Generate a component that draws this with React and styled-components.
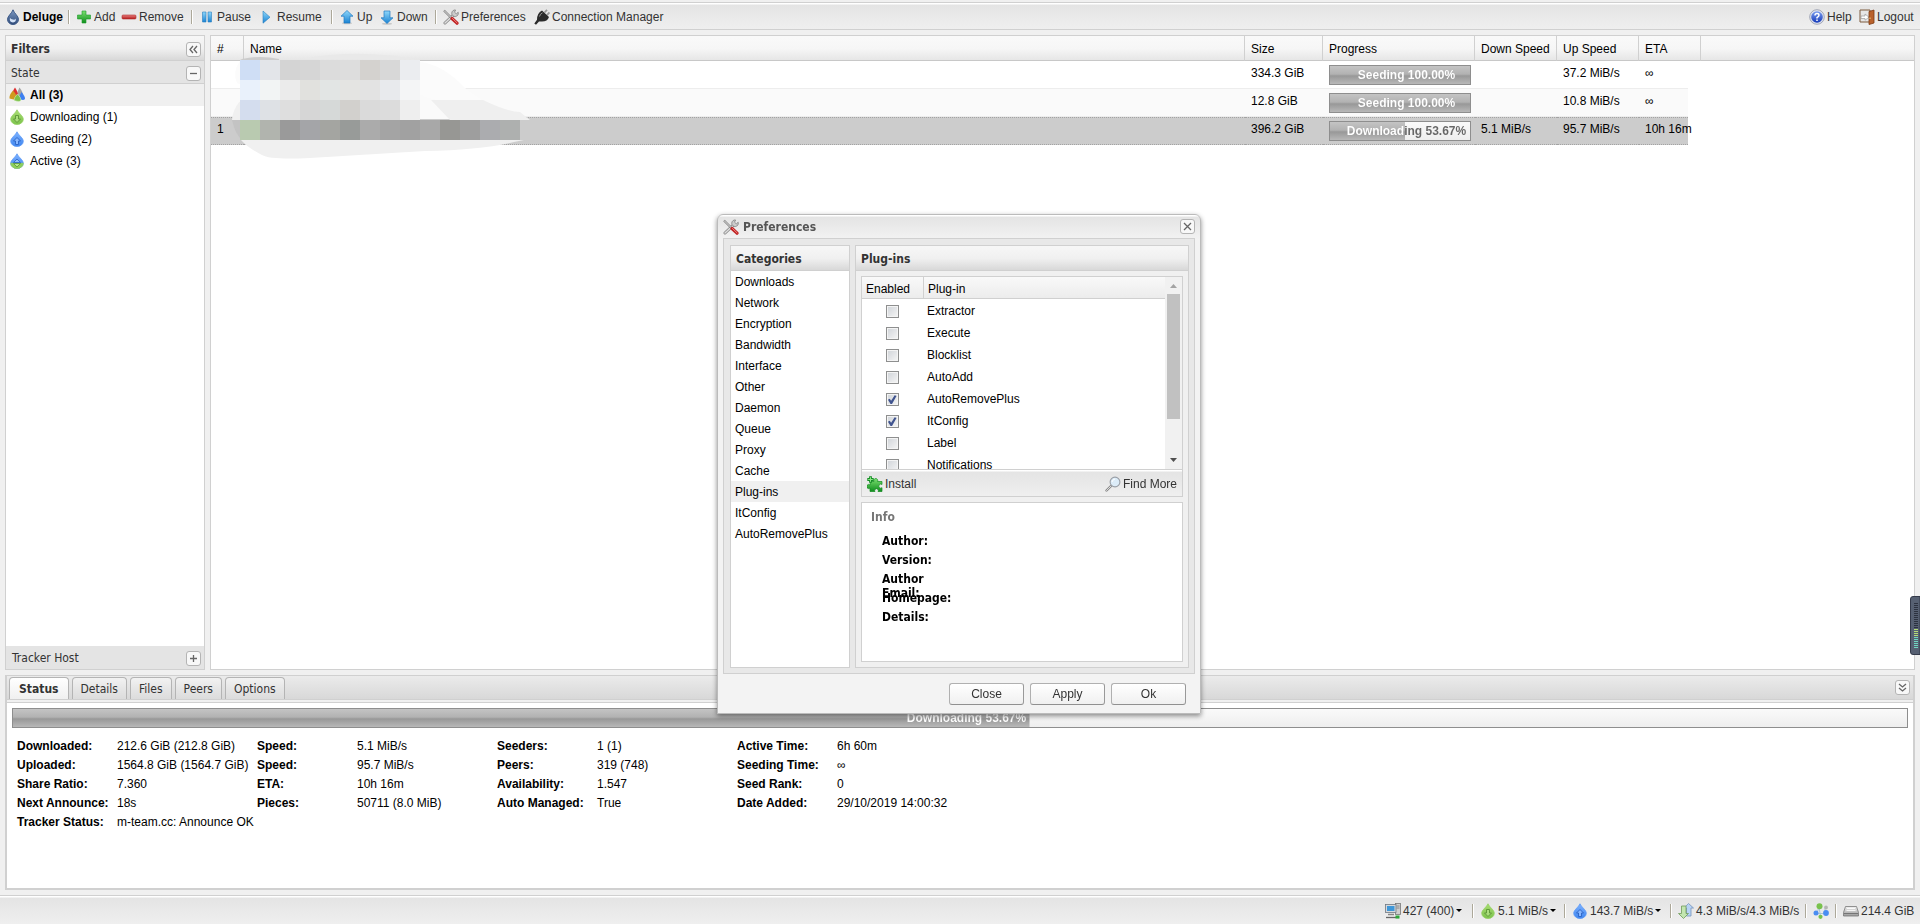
import styled, { createGlobalStyle } from "styled-components";

const sans = `"Liberation Sans", Arial, sans-serif`;
const title = `"DejaVu Sans Condensed", Tahoma, sans-serif`;

const GlobalStyle = createGlobalStyle`
  * { box-sizing: border-box; }
  body {
    margin: 0;
    background: #f0f0f0;
    color: #000;
    font: 12px/14px ${sans};
  }
  button, input { margin: 0; padding: 0; font: inherit; color: inherit; }
  ul, dl, dd { margin: 0; padding: 0; list-style: none; }
  table { border-collapse: separate; border-spacing: 0; table-layout: fixed; width: 100%; }
`;

const Page = styled.div`
  display: flex;
  flex-direction: column;
  height: 100vh;
  min-height: 600px;
  overflow: hidden;
`;

/* toolbars */

const Bar = styled.div`
  display: flex;
  align-items: center;
  flex: none;
  padding: 1px 2px 0;
  color: #333;
  border: solid #d0d0d0;
  border-width: 1px 0;
  background: linear-gradient(#fff 0 1px, #e4e4e4 2px, #efefef);
`;

const TopBar = styled(Bar)`
  height: 28px;
  margin-top: 2px;
`;

const StatusBar = styled(Bar)`
  height: 29px;
  border-bottom: 0;
  justify-content: flex-end;
`;

const ToolButton = styled.button`
  display: flex;
  align-items: center;
  flex: none;
  gap: 2px;
  width: ${({ $width }) => ($width ? `${$width}px` : "auto")};
  height: 22px;
  padding: 0 3px;
  border: 0;
  background: none;
  white-space: nowrap;
  font-weight: ${({ $bold }) => ($bold ? "bold" : "normal")};
  color: ${({ $bold }) => ($bold ? "#000" : "#333")};
  svg { flex: none; }
`;

const Separator = styled.i`
  width: 1px;
  height: 14px;
  margin: 0 4px;
  background: #aca899;
  box-shadow: 1px 0 #fff;
`;

const Spacer = styled.span`
  flex: 1;
`;

const Caret = styled.i`
  border: 3px solid transparent;
  border-top-color: #000;
  border-bottom: 0;
`;

/* panels */

const Main = styled.main`
  display: flex;
  flex: 1;
  gap: 5px;
  min-height: 0;
  padding: 5px;
`;

const Panel = styled.section`
  display: flex;
  flex-direction: column;
  border: 1px solid #d0d0d0;
  background: #fff;
`;

const FilterPanel = styled(Panel)`
  width: 200px;
`;

const PanelHeader = styled.h2`
  display: flex;
  align-items: center;
  justify-content: space-between;
  flex: none;
  height: 25px;
  margin: 0;
  padding: 2px 3px 0 ${({ $indent }) => $indent || 5}px;
  border-bottom: 1px solid #d0d0d0;
  background: linear-gradient(#f6f6f6 0 1px, #f0f0f0, #d8d8d8);
  font: bold 12px/14px ${title};
  color: #333;
`;

const SubHeader = styled(PanelHeader)`
  height: 23px;
  margin-top: ${({ $last }) => ($last ? "auto" : 0)};
  ${({ $last }) => $last && "border-bottom-color: #e4e4e4;"}
  background: #e4e4e4;
  font-weight: normal;
`;

const ToolIcon = styled.button`
  display: flex;
  align-items: center;
  justify-content: center;
  flex: none;
  width: 15px;
  height: 15px;
  border: 1px solid #b4b4b4;
  border-radius: 3px;
  background: #f8f8f8;
  svg { display: block; }
`;

const FilterRow = styled.li`
  display: flex;
  align-items: center;
  gap: 5px;
  height: 22px;
  padding: 0 3px;
  background: ${({ $selected }) => ($selected ? "#f0f0f0" : "none")};
  font-weight: ${({ $selected }) => ($selected ? "bold" : "normal")};
`;

/* torrent grid */

const GridPanel = styled(Panel)`
  position: relative;
  flex: 1;
  min-width: 0;
`;

const HeadCell = styled.th`
  height: 25px;
  padding: 2px 6px 0;
  text-align: left;
  font-weight: normal;
  white-space: nowrap;
  border-bottom: 1px solid #c8c8c8;
  border-right: ${({ $last }) => ($last ? 0 : "1px solid #d0d0d0")};
  background: linear-gradient(#f9f9f9 0 2px, #f6f6f6, #e6e6e6);
`;

const TorrentRow = styled.tr`
  td {
    height: 28px;
    padding: 5px 6px 0;
    vertical-align: top;
    white-space: nowrap;
  }
  td.bar { padding: 4px 4px 0 6px; }
  td:not(.rest) {
    background: ${({ $state }) =>
      ({ selected: "#ccc", alt: "#fafafa" })[$state] || "#fff"};
    border-bottom: 1px solid #ededed;
    ${({ $state }) =>
      $state === "selected" &&
      "border: dotted #a3a3a3; border-width: 1px 0; padding-top: 4px;"}
  }
  td.bar.bar { padding-top: ${({ $state }) => ($state === "selected" ? 3 : 4)}px; }
`;

const Mosaic = styled.svg`
  position: absolute;
  left: -1px;
  top: 14px;
`;

const ProgressTrack = styled.div`
  display: flex;
  height: 20px;
  border: 1px solid #8e8e8e;
  background:
    linear-gradient(#c4c4c4, #b2b2b2 45%, #989898 55%, #b8b8b8) no-repeat,
    linear-gradient(#fafafa, #eee);
`;

const ProgressText = styled.span`
  flex: 1;
  padding-left: 13px;
  text-align: center;
  font: bold 12px/18px ${sans};
  color: transparent;
  background-clip: text;
`;

/* details panel */

const Details = styled.section`
  display: flex;
  flex-direction: column;
  flex: none;
  height: 215px;
  margin: 0 5px 5px;
  border: solid #d0d0d0;
  border-width: 1px 2px 2px;
`;

const TabStrip = styled.div`
  display: flex;
  align-items: flex-end;
  gap: 3px;
  height: 24px;
  padding: 0 3px 0 2px;
  border-bottom: 1px solid #d0d0d0;
  background: linear-gradient(#ebebeb, #d8d8d8);
`;

const Tab = styled.button`
  height: 22px;
  padding: 0 ${({ $active }) => ($active ? 9 : 8)}px;
  border: 1px solid #b4b4b4;
  border-bottom: 0;
  border-radius: 4px 4px 0 0;
  background: ${({ $active }) =>
    $active
      ? "linear-gradient(#fff, #f0f0f0)"
      : "linear-gradient(#f2f2f2, #e6e6e6 50%, #dcdcdc)"};
  font: ${({ $active }) => ($active ? "bold" : "normal")} 12px/14px ${title};
  color: #333;
`;

const StripTool = styled.span`
  margin: 0 0 4px auto;
`;

const StatusBody = styled.div`
  flex: 1;
  margin-top: 2px;
  padding: 5px;
  border-top: 1px solid #d0d0d0;
  background: #fff;
`;

const StatusColumns = styled.div`
  display: flex;
  padding: 8px 5px;
`;

const Facts = styled.dl`
  display: grid;
  grid-template-columns: 100px 140px;
  grid-auto-rows: 19px;
  align-items: center;
  align-content: start;
  white-space: nowrap;
  dt { font-weight: bold; }
`;

/* preferences window */

const Overlay = styled.div`
  position: fixed;
  inset: 4px 2px 0 0;
  display: flex;
  align-items: center;
  justify-content: center;
`;

const Window = styled.div`
  display: flex;
  flex-direction: column;
  width: 484px;
  height: 500px;
  padding: 0 5px;
  border: 1px solid #bbb;
  border-radius: 6px 6px 0 0;
  background: linear-gradient(#fff 0 1px, #e4e4e4 2px, #f2f2f2 24px, #f3f3f3 25px);
  box-shadow: 0 2px 5px rgba(0, 0, 0, 0.45);
`;

const WindowTitle = styled.header`
  display: flex;
  align-items: center;
  gap: 4px;
  height: 23px;
  font: bold 12px/14px ${title};
  color: #555;
`;

const WindowBody = styled.div`
  display: flex;
  flex: 1;
  gap: 5px;
  min-height: 0;
  padding: 6px 5px 5px 6px;
  border: 1px solid #d0d0d0;
  background: #e8e8e8;
`;

const Categories = styled(Panel)`
  width: 120px;
  li {
    padding: 4px 4px 3px;
  }
  li[aria-selected="true"] { background: #f0f0f0; }
`;

const PluginPage = styled(Panel)`
  flex: 1;
  background: #f0f0f0;
`;

const PluginContent = styled.div`
  display: flex;
  flex-direction: column;
  flex: 1;
  gap: 5px;
  padding: 5px;
`;

const PluginBox = styled(Panel)`
  height: 221px;
`;

const PluginScroll = styled.div`
  display: flex;
  flex: 1;
  min-height: 0;
  overflow: hidden;
`;

const PluginTable = styled.table`
  flex: 1;
  width: auto;
  th {
    height: 22px;
    padding: 2px 4px 0;
    text-align: left;
    font-weight: normal;
    border-bottom: 1px solid #d0d0d0;
    background: linear-gradient(#f9f9f9, #ececec);
  }
  th:first-child { border-right: 1px solid #d0d0d0; }
  td { height: 22px; padding: 2px 3px 0; }
  td:first-child { text-align: center; padding-right: 5px; }
`;

const Check = styled.input`
  appearance: none;
  display: inline-block;
  position: relative;
  width: 13px;
  height: 13px;
  vertical-align: middle;
  border: 1px solid #8e8f8f;
  background: linear-gradient(135deg, #cfd3d8, #f6f6f6);
  box-shadow: inset 0 0 0 1px #f4f4f4;
  &:checked::after {
    content: "";
    position: absolute;
    inset: 1px;
    background: #40548f;
    clip-path: polygon(5% 50%, 25% 40%, 40% 62%, 80% 0, 100% 8%, 50% 98%, 34% 98%);
  }
`;

const ScrollBar = styled.div`
  display: flex;
  flex-direction: column;
  align-items: center;
  width: 17px;
  background: #f1f1f1;
  svg { height: 17px; flex: none; }
  svg:last-child { margin-top: auto; }
`;

const Thumb = styled.div`
  width: 13px;
  height: 125px;
  background: #c1c1c1;
`;

const PluginBar = styled(Bar)`
  height: 27px;
  border-bottom: 0;
  justify-content: space-between;
`;

const Info = styled.section`
  flex: 1;
  padding: 6px 9px;
  border: 1px solid #d0d0d0;
  background: #fff;
  h3 {
    margin: 0 0 9px;
    font: bold 12px/16px ${title};
    color: #777;
  }
`;

const InfoList = styled.ul`
  padding-left: 11px;
  font: bold 12px/14px ${title};
  li { width: 60px; height: 19px; }
`;

const Buttons = styled.footer`
  display: flex;
  justify-content: flex-end;
  gap: 6px;
  padding: 9px 9px 8px;
`;

const PushButton = styled.button`
  width: 75px;
  height: 22px;
  border: 1px solid #999;
  border-color: #b0b0b0 #999 #909090 #b0b0b0;
  border-radius: 3px;
  background: linear-gradient(#fff, #f0f0f0);
  color: #333;
`;

const SideMeter = styled.svg`
  position: fixed;
  right: 0;
  top: 596px;
`;

/* icons */

const dropPath = "M8 .8C9.500 4.200 14.300 7 14.300 10.300A6.300 5.200 0 0 1 1.700 10.300C1.700 7 6.500 4.200 8 .8Z";
const upArrow = "M8 1.500l6 5.700h-3V14H5V7.200H2Z";

function Svg({ children, size = 16 }) {
  return (
    <svg width={size} height={size} viewBox="0 0 16 16" aria-hidden="true">
      {children}
    </svg>
  );
}

function Gradients() {
  const list = [
    ["green", "#a9dd72", "#7cc34c"],
    ["blue", "#7db2ff", "#3f86f0"],
    ["sky", "#8fd8fb", "#1b83d3"],
    ["leaf", "#7be070", "#0f8d1d"],
    ["red", "#e88181", "#b51a1a"],
    ["navy", "#7f9bc4", "#2e4a78"],
    ["help", "#7da0f0", "#1539b8"],
    ["disk", "#f2f2f2", "#9a9a9a"],
  ];
  return (
    <svg width="0" height="0" style={{ position: "absolute" }} aria-hidden="true">
      <defs>
        {list.map(([id, from, to]) => (
          <linearGradient key={id} id={id} x1="0" y1="0" x2="0" y2="1">
            <stop offset="0" stopColor={from} />
            <stop offset="1" stopColor={to} />
          </linearGradient>
        ))}
      </defs>
    </svg>
  );
}

const icons = {
  deluge: (
    <>
      <path d="M8 .8C9 4.200 13.500 7 13.500 10.300A5.500 5.200 0 0 1 2.500 10.300C2.500 7 7 4.200 8 .8Z" fill="url(#navy)" stroke="#3d5a88" />
      <path d="M5 9Q4 13 8 13.500Q11.500 13 10.800 9.500Q10.500 11 8 10.500Q6 10 5 9Z" fill="#d4e2f6" />
    </>
  ),
  add: <path d="M6 2h4v4h4.500v4H10v4H6v-4H1.500V6H6Z" fill="url(#leaf)" stroke="#1b9a2a" strokeWidth=".6" />,
  remove: <rect x="1" y="6" width="14" height="4" rx="1" fill="url(#red)" stroke="#b03030" strokeWidth=".6" />,
  pause: <path d="M3.500 3h3.500v10H3.500ZM9 3h3.500v10H9Z" fill="url(#sky)" stroke="#2a7fc0" strokeWidth=".6" />,
  resume: <path d="M4 2l7 6.200-7 6Z" fill="url(#sky)" stroke="#2a7fc0" strokeWidth=".6" />,
  up: (
    <>
      <ellipse cx="8" cy="14.300" rx="5" ry="1" fill="#c8c8c8" />
      <path d={upArrow} fill="url(#sky)" stroke="#1f7ac2" strokeWidth=".7" />
    </>
  ),
  down: (
    <>
      <ellipse cx="8" cy="14.800" rx="5" ry="1" fill="#c8c8c8" />
      <path d="M8 14.500l6-5.700h-3V2H5v6.800H2Z" fill="url(#sky)" stroke="#1f7ac2" strokeWidth=".7" />
    </>
  ),
  tools: (
    <>
      <path d="M2 14L11 5.500" stroke="#808080" strokeWidth="3" strokeLinecap="round" />
      <path d="M2 14L11 5.500" stroke="#ddd" strokeWidth="1.600" strokeLinecap="round" />
      <path d="M15.200 3.300L13.300 4.800 11.500 3.200 12.600 1A3.300 3.300 0 1 0 15.200 3.300Z" fill="#ccc" stroke="#808080" strokeWidth=".8" />
      <path d="M1 1.500L8.500 9" stroke="#808080" strokeWidth="2.200" />
      <path d="M1 1.500L8.500 9" stroke="#e2e2e2" strokeWidth="1" />
      <path d="M9 9.500L14 14.200" stroke="#c02525" strokeWidth="3.200" strokeLinecap="round" />
      <path d="M9.500 9.500L14 13.800" stroke="#f08080" strokeWidth="1" strokeLinecap="round" />
    </>
  ),
  plug: (
    <>
      <path d="M10.500 3.500L13 .8M13 6L15.500 3.500" stroke="#999" strokeWidth="1.800" />
      <path d="M8 1.500L15 8Q13.500 12.500 8 12.500L5 12.500 2 15.800.300 14.500 3 10.800Q3 4 8 1.500Z" fill="#2b2b2b" />
      <path d="M5.500 7.500Q6 5 8.500 3.800" stroke="#999" fill="none" />
    </>
  ),
  help: (
    <>
      <circle cx="8" cy="8" r="7.300" fill="#dfe3ee" stroke="#8f96a8" strokeWidth=".8" />
      <circle cx="8" cy="8" r="5.800" fill="url(#help)" />
      <path d="M6 6.500Q6 4.600 8 4.600T10 6.300Q10 7.300 8 8.600V9.500M8 10.500V12" fill="none" stroke="#fff" strokeWidth="1.500" />
    </>
  ),
  logout: (
    <>
      <path d="M1 1h10v12H1Z" fill="#e6e6e6" stroke="#7d5a3c" />
      <path d="M2 7h4V5l4 3.200-4 3V9.500H2Z" fill="#fff" stroke="#999" strokeWidth=".7" />
      <path d="M10 2.500l5-1.500v13l-5 1.500Z" fill="#b9622d" stroke="#7c3a12" strokeWidth=".8" />
      <path d="M11 8.500v1.500" stroke="#f4d27c" />
    </>
  ),
  all: (
    <>
      <path d="M10.500 .5Q14 5 14 8T8 8Q8 5 10.500 .5Z" fill="#a5a5a5" />
      <path d="M12.500 5Q16 9 16 11.500T10 12Q10 9 12.500 5Z" fill="#3d7ff0" />
      <path d="M6 .5Q9 5 9 8T3 8Q3 5 6 .5Z" fill="#dc3131" />
      <path d="M4 3.500Q8 8 8 11T.5 11.500Q0 8 4 3.500Z" fill="#cf9a1f" />
      <path d="M8.500 7Q12 10.500 12 13T5 13.500Q5 10.500 8.500 7Z" fill="#7cc24a" stroke="#e4f5d6" strokeWidth=".5" />
    </>
  ),
  downloading: (
    <>
      <path d={dropPath} fill="url(#green)" stroke="#94cf62" strokeWidth=".8" />
      <path d="M6.500 6.500h3v3.500h2L8 13.500 4.500 10h2Z" fill="#a9dd7c" stroke="#5b9436" strokeWidth=".9" />
    </>
  ),
  seeding: (
    <>
      <path d={dropPath} fill="url(#blue)" stroke="#5c98f5" strokeWidth=".8" />
      <path d="M6.500 13.500V10h-2L8 6.500l3.500 3.500h-2v3.500Z" fill="#86b6ff" stroke="#2a62c4" strokeWidth=".9" />
    </>
  ),
  active: (
    <>
      <path d={dropPath} fill="url(#blue)" stroke="#5c98f5" strokeWidth=".8" />
      <path d="M1.700 10.300H14.300A6.300 5.200 0 0 1 1.700 10.300Z" fill="#8dcf5a" stroke="#94cf62" strokeWidth=".8" />
      <path d="M8 6l3.500 3.500h-7Z" fill="#8fbcff" stroke="#2a62c4" strokeWidth=".8" />
      <path d="M8 14l3.500-3.500h-7Z" fill="#b7e690" stroke="#5b9436" strokeWidth=".8" />
    </>
  ),
  puzzle: (
    <>
      <path d="M3.500 5.500H7a2 2 0 1 1 3.500 0H15v3a2 2 0 1 0 0 3.200V15.500h-4a1.800 1.800 0 1 0-3 0H3v-3.500a2 2 0 1 1 0-3Z" fill="url(#leaf)" stroke="#128a20" strokeWidth=".7" />
      <path d="M3.500 .3v6.400M.3 3.500h6.400" stroke="#168f25" strokeWidth="2.800" />
      <path d="M3.500 1.200v4.600M1.200 3.500h4.600" stroke="#8be487" strokeWidth="1" />
    </>
  ),
  find: (
    <>
      <path d="M1.500 14.500L6 10" stroke="#888" strokeWidth="2.400" strokeLinecap="round" />
      <path d="M1.500 14.500L6 10" stroke="#ddd" strokeWidth="1" strokeLinecap="round" />
      <circle cx="10" cy="6" r="4.900" fill="#dcecf8" stroke="#9a9fa6" strokeWidth="1.100" />
      <path d="M7 6Q7.500 3.500 10 3" stroke="#fff" fill="none" />
    </>
  ),
  network: (
    <>
      <rect x="10.500" y=".5" width="5" height="11" fill="#cfcfcf" stroke="#777" strokeWidth=".8" />
      <path d="M11.500 3h3M11.500 5h3" stroke="#777" strokeWidth=".8" />
      <rect x=".5" y="1.500" width="10.500" height="8" fill="#d5d9dd" stroke="#707880" strokeWidth=".8" />
      <rect x="2" y="3" width="7.500" height="5" fill="#3f97d8" />
      <path d="M3 11.500h6" stroke="#888" strokeWidth="1.500" />
      <path d="M1 14.500h13" stroke="#666" strokeWidth="1.300" />
      <rect x="10.500" y="12.500" width="4" height="3" fill="#2ea83a" />
    </>
  ),
  traffic: (
    <>
      <path d="M10.500 .5l5 4.500h-2.500v8h-4.500V5H6Z" fill="#b7d3f5" stroke="#7794bb" strokeWidth=".8" />
      <path d="M5.500 15.500l5-5H8V3H3.500v7.500H.5Z" fill="#c3e6b0" stroke="#6f9a5b" strokeWidth=".8" />
    </>
  ),
  dht: (
    <>
      <path d="M6 3.500L4 10.500H12L12 5.500M6 3.500L7.500 14" stroke="#a9c4d8" strokeWidth="1" fill="none" />
      <circle cx="6.500" cy="3.300" r="3" fill="#79c24d" />
      <circle cx="13" cy="4.500" r="1.900" fill="#b4b4b4" />
      <circle cx="3" cy="10" r="2.500" fill="#4a8df2" />
      <circle cx="13" cy="10" r="2.900" fill="#4a8df2" />
      <circle cx="7.500" cy="13.800" r="2.100" fill="#79c24d" />
    </>
  ),
  disk: (
    <>
      <path d="M2.500 3.500h11l2 6v3.500H.5V9.500Z" fill="url(#disk)" stroke="#777" strokeWidth=".8" />
      <path d="M1 10.500h14" stroke="#666" strokeWidth=".8" />
      <path d="M4 5.500h8M3.500 7.500h9" stroke="#fff" strokeWidth=".8" />
    </>
  ),
};

const glyphs = {
  collapseLeft: "M7 4L4 7.500 7 11M11 4L8 7.500 11 11",
  minus: "M4 7.500H11",
  plus: "M4 7.500H11M7.500 4V11",
  close: "M4 4L11 11M11 4L4 11",
  collapseDown: "M4 4L7.500 7 11 4M4 8L7.500 11 11 8",
};

const Icon = ({ name }) => <Svg>{icons[name]}</Svg>;

function Tool({ glyph, label }) {
  return (
    <ToolIcon aria-label={label}>
      <svg width="13" height="13" viewBox="1 1 13 13">
        <path d={glyphs[glyph]} fill="none" stroke="#666" strokeWidth="1.300" />
      </svg>
    </ToolIcon>
  );
}

/* data */

const toolbar = [
  ["deluge", "Deluge", 62],
  null,
  ["add", "Add", 45],
  ["remove", "Remove", 69],
  null,
  ["pause", "Pause", 60],
  ["resume", "Resume", 71],
  null,
  ["up", "Up", 40],
  ["down", "Down", 55],
  null,
  ["tools", "Preferences", 91],
  ["plug", "Connection Manager"],
];

const statusItems = [
  ["network", "427 (400)", 86, true],
  ["downloading", "5.1 MiB/s", 83, true],
  ["seeding", "143.7 MiB/s", 97, true],
  ["traffic", "4.3 MiB/s/4.3 MiB/s", 126],
  ["dht", "", 21],
  ["disk", "214.4 GiB", 78],
];

const filters = [
  ["all", "All (3)"],
  ["downloading", "Downloading (1)"],
  ["seeding", "Seeding (2)"],
  ["active", "Active (3)"],
];

const torrents = [
  { size: "334.3 GiB", status: "Seeding", progress: 100, up: "37.2 MiB/s", eta: "∞" },
  { size: "12.8 GiB", status: "Seeding", progress: 100, up: "10.8 MiB/s", eta: "∞", state: "alt" },
  {
    pos: 1,
    size: "396.2 GiB",
    status: "Downloading",
    progress: 53.67,
    down: "5.1 MiB/s",
    up: "95.7 MiB/s",
    eta: "10h 16m",
    state: "selected",
  },
];

const facts = [
  [
    ["Downloaded:", "212.6 GiB (212.8 GiB)"],
    ["Uploaded:", "1564.8 GiB (1564.7 GiB)"],
    ["Share Ratio:", "7.360"],
    ["Next Announce:", "18s"],
    ["Tracker Status:", "m-team.cc: Announce OK"],
  ],
  [
    ["Speed:", "5.1 MiB/s"],
    ["Speed:", "95.7 MiB/s"],
    ["ETA:", "10h 16m"],
    ["Pieces:", "50711 (8.0 MiB)"],
  ],
  [
    ["Seeders:", "1 (1)"],
    ["Peers:", "319 (748)"],
    ["Availability:", "1.547"],
    ["Auto Managed:", "True"],
  ],
  [
    ["Active Time:", "6h 60m"],
    ["Seeding Time:", "∞"],
    ["Seed Rank:", "0"],
    ["Date Added:", "29/10/2019 14:00:32"],
  ],
];

const categories = [
  "Downloads",
  "Network",
  "Encryption",
  "Bandwidth",
  "Interface",
  "Other",
  "Daemon",
  "Queue",
  "Proxy",
  "Cache",
  "Plug-ins",
  "ItConfig",
  "AutoRemovePlus",
];

const plugins = [
  ["Extractor", false],
  ["Execute", false],
  ["Blocklist", false],
  ["AutoAdd", false],
  ["AutoRemovePlus", true],
  ["ItConfig", true],
  ["Label", false],
  ["Notifications", false],
];

const mosaicRows = [
  ["#cfdef5", "#e3e5e9", "#d4d4d4", "#d6d6d6", "#dcdcdc", "#dddddd", "#d4d2cf", "#d8d8d8", "#ebedf0"],
  ["#e9f1fb", "#f2f4f4", "#ebebeb", "#e1e1de", "#e2e5e4", "#e4e4e2", "#e3e3e3", "#e8eaed", "#f4f5f6"],
  ["#d4ddee", "#dee1e5", "#dedede", "#d6d6d6", "#d6d9d8", "#d2d0cd", "#dadada", "#dcdcdc", "#eeeeee"],
  ["#b9cab0", "#b1b4ae", "#9a9a9a", "#a4a5a8", "#a4a5a1", "#989b99", "#ababab", "#a4a4a4", "#a1a1a1", "#a8a8a8", "#979794", "#9e9e9e", "#abacaf", "#aeb0af"],
];

function Progress({ status, value }) {
  return (
    <ProgressTrack style={{ backgroundSize: `${value}% 100%, 100% 100%` }}>
      <ProgressText
        style={{
          backgroundImage: `linear-gradient(90deg, #fff ${value}%, #666 ${value}%)`,
        }}
      >
        {status} {value.toFixed(2)}%
      </ProgressText>
    </ProgressTrack>
  );
}

function NameMosaic() {
  return (
    <Mosaic width="330" height="115" viewBox="0 0 330 115" aria-hidden="true">
      <path d="M32 9Q50 5 69 9V10H30Z" fill="#ccc" />
      <path d="M90 9Q150-2 210 10Z" fill="#e9e9e9" />
      <path d="M30 11Q22 22 27 33L38 38H30Z" fill="#fbfbfb" />
      <path d="M210 12Q232 14 255 38L273 50H210Z" fill="#fbfbfb" />
      <path d="M202 42L225 50 242 69H202Z" fill="#fafafa" />
      <path d="M221 50H273Q298 62 310 62L320 70H240Z" fill="#efefef" />
      <path d="M54 40Q24 46 22 70H54Z" fill="#f0f0f0" />
      <path d="M22 70Q25 84 32 90V70Z" fill="#c3c3c3" />
      <path d="M31 90H314L304 92Q270 100 215 101L100 108Q60 110 52 105Q38 98 31 90Z" fill="#f0f0f0" />
      {mosaicRows.map((row, y) =>
        row.map((fill, x) => (
          <rect key={`${x}-${y}`} x={30 + x * 20} y={10 + y * 20} width="20" height="20" fill={fill} />
        ))
      )}
    </Mosaic>
  );
}

function TorrentGrid() {
  return (
    <GridPanel>
      <table>
        <colgroup>
          <col width="33" />
          <col />
          <col width="78" />
          <col width="152" />
          <col width="82" />
          <col width="82" />
          <col width="49" />
          <col width="13" />
          <col width="213" />
        </colgroup>
        <thead>
          <tr>
            <HeadCell>#</HeadCell>
            <HeadCell>Name</HeadCell>
            <HeadCell>Size</HeadCell>
            <HeadCell>Progress</HeadCell>
            <HeadCell>Down Speed</HeadCell>
            <HeadCell>Up Speed</HeadCell>
            <HeadCell colSpan={2}>ETA</HeadCell>
            <HeadCell $last />
          </tr>
        </thead>
        <tbody>
          {torrents.map((t) => (
            <TorrentRow key={t.size} $state={t.state}>
              <td>{t.pos}</td>
              <td />
              <td>{t.size}</td>
              <td className="bar">
                <Progress status={t.status} value={t.progress} />
              </td>
              <td>{t.down}</td>
              <td>{t.up}</td>
              <td>{t.eta}</td>
              <td className="rest" colSpan={2} />
            </TorrentRow>
          ))}
        </tbody>
      </table>
      <NameMosaic />
    </GridPanel>
  );
}

function Preferences() {
  return (
    <Overlay>
      <Window role="dialog" aria-label="Preferences">
        <WindowTitle>
          <Icon name="tools" />
          Preferences
          <Spacer />
          <Tool glyph="close" label="Close window" />
        </WindowTitle>
        <WindowBody>
          <Categories>
            <PanelHeader>Categories</PanelHeader>
            <ul role="listbox" aria-label="Categories">
              {categories.map((c) => (
                <li key={c} role="option" aria-selected={c === "Plug-ins"}>
                  {c}
                </li>
              ))}
            </ul>
          </Categories>
          <PluginPage>
            <PanelHeader>Plug-ins</PanelHeader>
            <PluginContent>
              <PluginBox>
                <PluginScroll>
                  <PluginTable>
                    <colgroup>
                      <col width="62" />
                      <col />
                    </colgroup>
                    <thead>
                      <tr>
                        <th>Enabled</th>
                        <th>Plug-in</th>
                      </tr>
                    </thead>
                    <tbody>
                      {plugins.map(([name, on]) => (
                        <tr key={name}>
                          <td>
                            <Check type="checkbox" id={name} defaultChecked={on} />
                          </td>
                          <td>
                            <label htmlFor={name}>{name}</label>
                          </td>
                        </tr>
                      ))}
                    </tbody>
                  </PluginTable>
                  <ScrollBar>
                    <svg width="17" height="17" viewBox="0 0 17 17">
                      <path d="M5 11H12L8.500 7Z" fill="#a3a3a3" />
                    </svg>
                    <Thumb />
                    <svg width="17" height="17" viewBox="0 0 17 17">
                      <path d="M5 6H12L8.500 10Z" fill="#505050" />
                    </svg>
                  </ScrollBar>
                </PluginScroll>
                <PluginBar>
                  <ToolButton>
                    <Icon name="puzzle" />
                    Install
                  </ToolButton>
                  <ToolButton>
                    <Icon name="find" />
                    Find More
                  </ToolButton>
                </PluginBar>
              </PluginBox>
              <Info>
                <h3>Info</h3>
                <InfoList>
                  <li>Author:</li>
                  <li>Version:</li>
                  <li>Author Email:</li>
                  <li>Homepage:</li>
                  <li>Details:</li>
                </InfoList>
              </Info>
            </PluginContent>
          </PluginPage>
        </WindowBody>
        <Buttons>
          <PushButton>Close</PushButton>
          <PushButton>Apply</PushButton>
          <PushButton>Ok</PushButton>
        </Buttons>
      </Window>
    </Overlay>
  );
}

function Meter() {
  return (
    <SideMeter width="10" height="59" viewBox="0 0 10 59" aria-hidden="true">
      <path d="M10 .5H3Q.5 .5 .5 3V56Q.5 58.500 3 58.500H10Z" fill="#566072" stroke="#343a4a" />
      {Array.from({ length: 23 }, (_, i) => (
        <rect
          key={i}
          x="4"
          y={7 + i * 2}
          width="4"
          height="1"
          fill={i < 13 ? "#2c3240" : i < 17 ? "#b4dc78" : "#6fd6c0"}
        />
      ))}
    </SideMeter>
  );
}

export default function App() {
  return (
    <Page>
      <GlobalStyle />
      <Gradients />
      <TopBar as="nav">
        {toolbar.map((item, i) =>
          item ? (
            <ToolButton key={item[1]} $bold={i === 0} $width={item[2]}>
              <Icon name={item[0]} />
              {item[1]}
            </ToolButton>
          ) : (
            <Separator key={i} />
          )
        )}
        <Spacer />
        <ToolButton $width={50}>
          <Icon name="help" />
          Help
        </ToolButton>
        <ToolButton $width={62}>
          <Icon name="logout" />
          Logout
        </ToolButton>
      </TopBar>

      <Main>
        <FilterPanel>
          <PanelHeader>
            Filters
            <Tool glyph="collapseLeft" label="Collapse filters" />
          </PanelHeader>
          <SubHeader as="h3">
            State
            <Tool glyph="minus" label="Collapse state" />
          </SubHeader>
          <ul>
            {filters.map(([icon, label], i) => (
              <FilterRow key={label} $selected={i === 0}>
                <Icon name={icon} />
                {label}
              </FilterRow>
            ))}
          </ul>
          <SubHeader as="h3" $last $indent={6}>
            Tracker Host
            <Tool glyph="plus" label="Expand tracker host" />
          </SubHeader>
        </FilterPanel>
        <TorrentGrid />
      </Main>

      <Details>
        <TabStrip role="tablist">
          {["Status", "Details", "Files", "Peers", "Options"].map((tab, i) => (
            <Tab key={tab} role="tab" $active={i === 0}>
              {tab}
            </Tab>
          ))}
          <StripTool>
            <Tool glyph="collapseDown" label="Collapse details" />
          </StripTool>
        </TabStrip>
        <StatusBody>
          <Progress status="Downloading" value={53.67} />
          <StatusColumns>
            {facts.map((column, i) => (
              <Facts key={i}>
                {column.map(([name, value]) => [
                  <dt key={name + value}>{name}</dt>,
                  <dd key={value}>{value}</dd>,
                ])}
              </Facts>
            ))}
          </StatusColumns>
        </StatusBody>
      </Details>

      <StatusBar as="footer">
        {statusItems.map(([icon, text, width, menu], i) => [
          i > 0 && <Separator key={`${icon}-separator`} />,
          <ToolButton key={icon} $width={width} aria-label={text || "DHT nodes"}>
            <Icon name={icon} />
            {text}
            {menu && <Caret />}
          </ToolButton>,
        ])}
      </StatusBar>

      <Preferences />
      <Meter />
    </Page>
  );
}
